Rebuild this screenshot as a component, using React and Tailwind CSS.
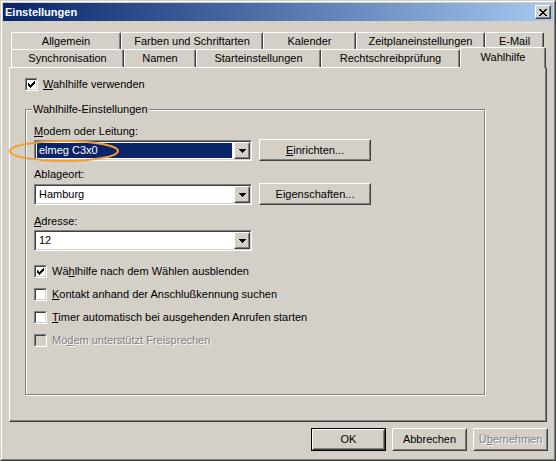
import React from "react";

const font = "font-['Liberation_Sans',Arial,sans-serif]";

const Sunken = ({ className = "", inner = "", children }) => (
  <div className={`border border-t-[#808080] border-l-[#808080] border-b-white border-r-white ${className}`}>
    <div className={`h-full w-full border border-t-[#404040] border-l-[#404040] border-b-[#d4d0c8] border-r-[#d4d0c8] ${inner}`}>
      {children}
    </div>
  </div>
);

const Raised = ({ className = "", inner = "", children }) => (
  <div className={`border border-t-white border-l-white border-b-[#404040] border-r-[#404040] ${className}`}>
    <div className={`h-full w-full border border-t-[#d4d0c8] border-l-[#d4d0c8] border-b-[#808080] border-r-[#808080] ${inner}`}>
      {children}
    </div>
  </div>
);

const checkPixels = [
  [6, 0, 1], [5, 1, 2], [0, 2, 1], [4, 2, 3], [0, 3, 2], [3, 3, 3], [0, 4, 5], [1, 5, 3], [2, 6, 1],
];

const CheckMark = ({ color = "#000" }) => (
  <svg width="7" height="7" viewBox="0 0 7 7" shapeRendering="crispEdges">
    {checkPixels.map(([x, y, w], i) => (
      <rect key={i} x={x} y={y} width={w} height="1" fill={color} />
    ))}
  </svg>
);

const Checkbox = ({ checked, disabled, children }) => (
  <div className="flex items-center h-[13px]">
    <Sunken
      className="w-[13px] h-[13px] shrink-0"
      inner={`flex items-center justify-center ${disabled ? "bg-[#d4d0c8]" : "bg-white"}`}
    >
      {checked && <CheckMark />}
    </Sunken>
    <span
      className={`ml-[5px] whitespace-nowrap ${
        disabled ? "text-[#808080] [text-shadow:1px_1px_0_#fff]" : ""
      }`}
    >
      {children}
    </span>
  </div>
);

const Arrow = () => (
  <svg width="7" height="4" viewBox="0 0 7 4" shapeRendering="crispEdges">
    <rect x="0" y="0" width="7" height="1" fill="#000" />
    <rect x="1" y="1" width="5" height="1" fill="#000" />
    <rect x="2" y="2" width="3" height="1" fill="#000" />
    <rect x="3" y="3" width="1" height="1" fill="#000" />
  </svg>
);

const Combo = ({ value, selected }) => (
  <Sunken className="w-[218px] h-[21px]" inner="flex bg-white">
    <div className="flex-1 p-px pr-[2px]">
      <div
        className={`h-full flex items-center pl-[2px] ${
          selected ? "bg-[#0a246a] text-white" : ""
        }`}
      >
        {value}
      </div>
    </div>
    <Raised className="w-[16px] h-full" inner="flex items-center justify-center bg-[#d4d0c8]">
      <Arrow />
    </Raised>
  </Sunken>
);

const Button = ({ children, className = "", isDefault, disabled }) => {
  const body = (
    <Raised className="w-full h-full" inner="flex items-center justify-center bg-[#d4d0c8]">
      <span className={disabled ? "text-[#808080] [text-shadow:1px_1px_0_#fff]" : ""}>{children}</span>
    </Raised>
  );
  if (isDefault) {
    return <div className={`border border-black ${className}`}>{body}</div>;
  }
  return <div className={className}>{body}</div>;
};

const Tab = ({ label, w }) => (
  <div
    className={`${w} h-full flex items-center justify-center border-t border-l border-r border-t-white border-l-white border-r-[#404040] rounded-t-[2px] shadow-[inset_-1px_0_0_#808080] whitespace-nowrap`}
  >
    {label}
  </div>
);

const closePixels = [
  [0, 0, 2], [6, 0, 2], [1, 1, 2], [5, 1, 2], [2, 2, 4], [3, 3, 2], [2, 4, 4], [1, 5, 2], [5, 5, 2], [0, 6, 2], [6, 6, 2],
];

const U = ({ children }) => <span className="underline underline-offset-[1px]">{children}</span>;

export default function App() {
  return (
    <div
      className={`relative w-[556px] h-[461px] bg-[#d4d0c8] text-[11px] leading-[13px] text-black ${font} border border-t-[#d4d0c8] border-l-[#d4d0c8] border-r-[#404040] border-b-[#404040]`}
    >
      <div className="h-full border border-t-white border-l-white border-r-[#808080] border-b-[#808080] p-px flex flex-col">
        {/* title bar */}
        <div className="h-[18px] flex items-center justify-between bg-linear-to-r from-[#0a246a] to-[#a6caf0] pl-[2px] pr-[2px]">
          <span className="font-bold text-white text-[11px]">Einstellungen</span>
          <Raised className="w-[16px] h-[14px]" inner="flex items-center justify-center bg-[#d4d0c8]">
            <svg width="8" height="7" viewBox="0 0 8 7" shapeRendering="crispEdges">
              {closePixels.map(([x, y, w], i) => (
                <rect key={i} x={x} y={y} width={w} height="1" fill="#000" />
              ))}
            </svg>
          </Raised>
        </div>

        {/* tabs */}
        <div className="mt-[11px] pl-[8px] flex h-[17px]">
          <Tab label="Allgemein" w="w-[110px]" />
          <Tab label="Farben und Schriftarten" w="w-[142px]" />
          <Tab label="Kalender" w="w-[93px]" />
          <Tab label="Zeitplaneinstellungen" w="w-[129px]" />
          <Tab label="E-Mail" w="w-[59px]" />
        </div>
        <div className="pl-[8px] flex items-end h-[18px]">
          <Tab label="Synchronisation" w="w-[113px]" />
          <Tab label="Namen" w="w-[72px]" />
          <Tab label="Starteinstellungen" w="w-[125px]" />
          <Tab label="Rechtschreibprüfung" w="w-[139px]" />
          <div className="relative z-10 w-[86px] h-[21px] -mb-px flex items-center justify-center pb-[2px] bg-[#d4d0c8] border-t border-l border-r border-t-white border-l-white border-r-[#404040] rounded-t-[2px] shadow-[inset_-1px_0_0_#808080]">
            Wahlhilfe
          </div>
        </div>

        {/* panel */}
        <div className="ml-[6px] w-[538px] h-[355px] border border-t-white border-l-white border-r-[#404040] border-b-[#404040] shadow-[inset_-1px_-1px_0_#808080] pt-[10px] pl-[15px]">
          <Checkbox checked>
            <U>W</U>ahlhilfe verwenden
          </Checkbox>

          <div className="mt-[18px] w-[460px] h-[286px] border border-[#808080] shadow-[inset_1px_1px_0_#fff,1px_1px_0_#fff] pl-[8px]">
            <div className="-mt-[7px] -ml-[2px] px-[1px] w-fit h-[13px] bg-[#d4d0c8]">Wahlhilfe-Einstellungen</div>

            <div className="mt-[9px] h-[13px]">
              <U>M</U>odem oder Leitung:
            </div>
            <div className="mt-px flex items-start h-[22px]">
              <div className="mt-px">
                <Combo value="elmeg C3x0" selected />
              </div>
              <Button className="ml-[7px] w-[112px] h-[22px]">
                <U>E</U>inrichten...
              </Button>
            </div>

            <div className="mt-[7px] h-[13px]">
              Abla<U>g</U>eort:
            </div>
            <div className="mt-[2px] flex items-start h-[22px]">
              <div className="mt-px">
                <Combo value="Hamburg" />
              </div>
              <Button className="ml-[7px] w-[112px] h-[22px]">
                Ei<U>g</U>enschaften...
              </Button>
            </div>

            <div className="mt-[10px] h-[13px]">
              <U>A</U>dresse:
            </div>
            <div className="mt-[2px]">
              <Combo value="12" />
            </div>

            <div className="mt-[14px] flex flex-col gap-[10px]">
              <Checkbox checked>
                Wä<U>h</U>lhilfe nach dem Wählen ausblenden
              </Checkbox>
              <Checkbox>
                <U>K</U>ontakt anhand der Anschlußkennung suchen
              </Checkbox>
              <Checkbox>
                <U>T</U>imer automatisch bei ausgehenden Anrufen starten
              </Checkbox>
              <Checkbox disabled>
                Mo<U>d</U>em unterstützt Freisprechen
              </Checkbox>
            </div>
          </div>
        </div>

        {/* dialog buttons */}
        <div className="mt-[6px] flex justify-end gap-[6px] pr-[5px]">
          <Button isDefault className="w-[75px] h-[23px]">
            OK
          </Button>
          <Button className="w-[75px] h-[23px]">Abbrechen</Button>
          <Button disabled className="w-[75px] h-[23px]">
            Ü<U>b</U>ernehmen
          </Button>
        </div>
      </div>

      {/* highlight ellipse */}
      <svg className="absolute left-[7px] top-[138px]" width="114" height="24" viewBox="0 0 114 24">
        <ellipse cx="56" cy="12" rx="54" ry="10" fill="none" stroke="#f0a030" strokeWidth="2" />
      </svg>
    </div>
  );
}
